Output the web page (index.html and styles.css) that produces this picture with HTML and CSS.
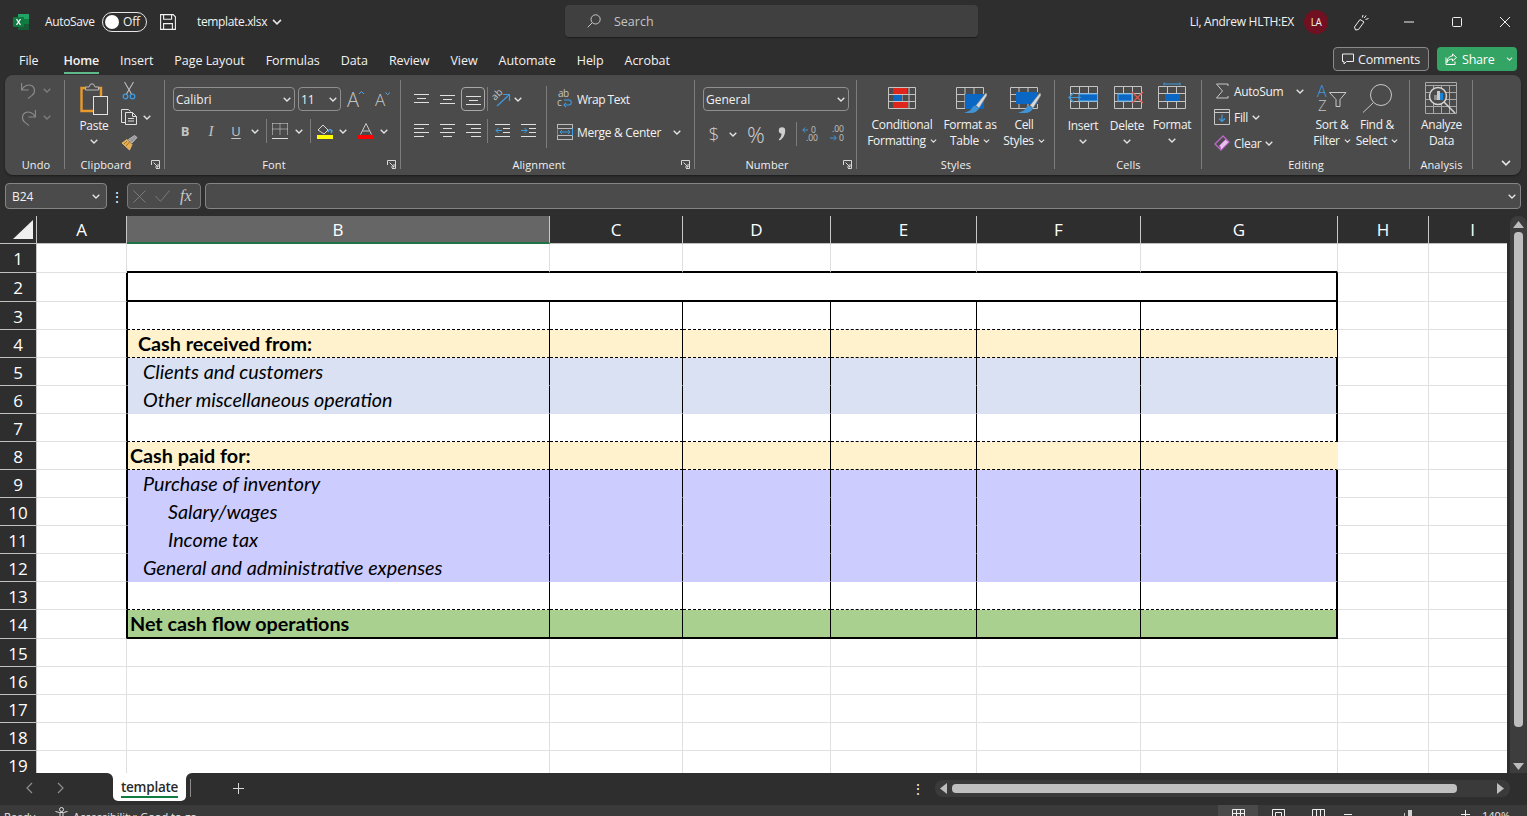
FILE: index.html
```html
<!DOCTYPE html>
<html lang="en">
<head>
<meta charset="utf-8">
<title>template.xlsx</title>
<link rel="stylesheet" href="styles.css">
</head>
<body>
<svg class="defs" aria-hidden="true">
  <symbol id="ch" viewBox="0 0 8 5"><path d="M.7.7 4 4 7.3.7" fill="none" stroke="currentColor" stroke-width="1.3"/></symbol>
  <symbol id="launch" viewBox="0 0 9 9"><path d="M.5 5V.5h8v8H5M2.5 2.5 7 7M7 4v3H4" fill="none" stroke="#d8d8d8"/></symbol>
  <symbol id="brush" viewBox="0 0 31 26"><path d="M30 6 20 18.500l3 2.500 8-13z" fill="#d8d8d8" stroke="#8f8f8f" stroke-width=".6"/><path d="M19 18.500c-3 1-3 3.500-5 4.800-1.500 1-3.500 1.700-6 2.700h7c4 0 6.500-2 8-4.500z" fill="#3f94d8"/></symbol>
</svg>

<header class="titlebar">
  <div class="tb-left">
    <svg class="xl" width="16" height="16" viewBox="0 0 16 16"><rect x="5" width="11" height="5.500" fill="#21a366"/><rect x="5" y="5" width="11" height="5.500" fill="#107c41"/><rect x="5" y="10.500" width="11" height="5.500" fill="#185c37"/><rect y="3" width="11" height="10" rx="1" fill="#0e7a3f"/><path d="m3.500 5.200 4 5.600m0-5.600-4 5.600" stroke="#fff" stroke-width="1.200"/></svg>
    <span class="autosave">AutoSave</span>
    <span class="toggle"><i class="knob"></i><span>Off</span></span>
    <svg class="save" width="16" height="16" viewBox="0 0 16 16" fill="none" stroke="#f2f2f2" stroke-width="1.100"><path d="M.6.600h12.600l2.200 2.200v12.600H.6zM3.600.600v4.600h8V.600M3.600 15.400V9.600h8.800v5.800"/></svg>
    <span class="fname">template.xlsx</span>
    <svg class="ch fn-ch"><use href="#ch"/></svg>
  </div>
  <div class="search">
    <svg width="14" height="14" viewBox="0 0 14 14" fill="none" stroke="#c8c8c8"><circle cx="8.600" cy="5.400" r="4.600"/><path d="M5.200 8.800.7 13.300"/></svg>
    <span>Search</span>
  </div>
  <div class="tb-right">
    <span class="uname">Li, Andrew HLTH:EX</span>
    <span class="avatar">LA</span>
    <svg width="17" height="17" viewBox="0 0 17 17" fill="none" stroke="#efefef"><path d="M7 5.500 11 8 5.500 15.500 2.500 16 1.500 13zM10 1l-.7 2.600M13 1.500 11.300 4M15.500 4.500l-3 1"/></svg>
    <svg width="10" height="10" viewBox="0 0 10 10"><path d="M0 5h10" stroke="#efefef"/></svg>
    <svg width="10" height="10" viewBox="0 0 10 10"><rect x=".5" y=".5" width="9" height="9" rx="1" fill="none" stroke="#efefef"/></svg>
    <svg width="10" height="10" viewBox="0 0 10 10"><path d="m0 0 10 10M10 0 0 10" stroke="#efefef"/></svg>
  </div>
</header>

<nav class="tabs">
  <span>File</span>
  <span class="active">Home</span>
  <span>Insert</span>
  <span>Page Layout</span>
  <span>Formulas</span>
  <span>Data</span>
  <span>Review</span>
  <span>View</span>
  <span>Automate</span>
  <span>Help</span>
  <span>Acrobat</span>
  <div class="tab-actions">
    <button class="comments"><svg width="12" height="12" viewBox="0 0 12 12" fill="none" stroke="#eee"><path d="M.5 1h11v7.500H4.500L2 11V8.500H.5z"/></svg>Comments</button>
    <button class="share"><svg width="12" height="12" viewBox="0 0 12 12" fill="none" stroke="#fff"><path d="M7.500 1 11.500 4.500 7.500 8V6C4 6 2.500 7.500 2 9.500 2 6 4 3 7.500 3zM1 4.500v7h9V8.500"/></svg><span>Share</span><svg class="ch share-ch"><use href="#ch"/></svg></button>
  </div>
</nav>

<section class="ribbon">
  <div class="group g-undo">
    <div class="gbody undo-body">
      <div class="undo-row">
        <svg width="15" height="18" viewBox="0 0 15 18" fill="none" stroke="#8c8c8c" stroke-width="1.100"><path d="M.6 1v7h7M.8 7.500C3 3.500 7.500 2 10.500 3.600c4 2.200 4 7.500.2 10L7 16.600"/></svg>
        <svg class="ch dim"><use href="#ch"/></svg>
      </div>
      <div class="undo-row">
        <svg width="15" height="18" viewBox="0 0 15 18" fill="none" stroke="#8c8c8c" stroke-width="1.100"><path d="M14.400 1v7h-7M14.200 7.500C12 3.500 7.500 2 4.500 3.600c-4 2.200-4 7.500-.2 10L8 16.600"/></svg>
        <svg class="ch dim"><use href="#ch"/></svg>
      </div>
    </div>
    <div class="glabel"><span>Undo</span></div>
  </div>

  <div class="group g-clip">
    <div class="gbody clip-body">
      <div class="big">
        <div class="big-ico paste-ico">
          <svg width="28" height="32" viewBox="0 0 28 32" fill="none"><path d="M6 5H1.500v23H13M16 5h5v8" stroke="#e89a2c" stroke-width="2.400"/><path d="M5.500 7V4H9l1.500-3h3L15 4h3.500v3z" stroke="#b8b8b8" fill="#4b4b4b"/><rect x="13.500" y="13.500" width="14" height="18" stroke="#e4e4e4" fill="#4b4b4b"/></svg>
        </div>
        <span class="big-text">Paste</span>
        <svg class="ch big-ch"><use href="#ch"/></svg>
      </div>
      <div class="clip-tools">
        <div class="clip-row">
          <svg width="16" height="18" viewBox="0 0 16 18" fill="none"><path d="M3.500 0 10.500 12M12.500 0 5.500 12" stroke="#bdbdbd" stroke-width="1.100"/><circle cx="4.500" cy="14.500" r="2.300" stroke="#3d9be0" stroke-width="1.300"/><circle cx="11.500" cy="14.500" r="2.300" stroke="#3d9be0" stroke-width="1.300"/></svg>
        </div>
        <div class="clip-row">
          <svg width="16" height="16" viewBox="0 0 16 16" fill="none" stroke="#e0e0e0"><path d="M4.500 13.500H.5V.5h7l2 2"/><path d="M4.500 3.500h7l4 4v8h-11zM11.500 3.500v4h4M7 9.500h6M7 12h6"/></svg>
          <svg class="ch clip-ch"><use href="#ch"/></svg>
        </div>
        <div class="clip-row">
          <svg width="16" height="16" viewBox="0 0 16 16" fill="none"><path d="M6 4.500 11 9.500 8.500 15 1 8z" fill="#e8ad4e" stroke="#f4c878" stroke-width=".8"/><path d="M5 11 9 6.500M3 9l3-3" stroke="#8a6a2a" stroke-width=".8"/><path d="M7.500 4.500 9.500 6.500 11 8 16 2.500 13.500.5z" fill="#9a9a9a" stroke="#c8c8c8" stroke-width=".8"/></svg>
        </div>
      </div>
    </div>
    <div class="glabel"><span>Clipboard</span><svg class="launch"><use href="#launch"/></svg></div>
  </div>

  <div class="group g-font">
    <div class="gbody stack">
      <div class="font-r1">
        <div class="combo font-name"><span>Calibri</span><svg class="ch"><use href="#ch"/></svg></div>
        <div class="combo font-size"><span>11</span><svg class="ch"><use href="#ch"/></svg></div>
        <svg class="grow-a" width="18" height="18" viewBox="0 0 18 18"><text x="0" y="17" class="ig ig-a1">A</text><path d="m12 4 2.500-2.500L17 4" fill="none" stroke="#56a6e6"/></svg>
        <svg class="shrink-a" width="16" height="16" viewBox="0 0 16 16"><text x="0" y="15" class="ig ig-a2">A</text><path d="m10.500 1.500 2.200 2.200L15 1.500" fill="none" stroke="#56a6e6"/></svg>
      </div>
      <div class="font-r2">
        <span class="ig-b">B</span>
        <span class="ig-i">I</span>
        <span class="ig-u">U</span>
        <svg class="ch"><use href="#ch"/></svg>
        <i class="sep"></i>
        <svg width="16" height="16" viewBox="0 0 16 16" fill="none" stroke="#dcdcdc"><path d="M.5.500h15M.5.500v11M15.500.500v11M8 .5v11M.5 6h15" stroke-dasharray="1 1"/><path d="M0 15.500h16"/></svg>
        <svg class="ch"><use href="#ch"/></svg>
        <i class="sep"></i>
        <svg width="16" height="16" viewBox="0 0 16 16"><path d="M1 7 6 2l5 5-4 4z" fill="none" stroke="#d8d8d8"/><path d="M11 9c1-3 2-3 4-1l-1 2" fill="none" stroke="#5aa5de" stroke-width="1.500"/><rect y="12" width="16" height="4" fill="#ffff00"/></svg>
        <svg class="ch"><use href="#ch"/></svg>
        <svg width="16" height="16" viewBox="0 0 16 16"><path d="m2.500 11.500 5.500-11 5.500 11M4.500 8h7" fill="none" stroke="#c8c8c8"/><rect y="12" width="16" height="4" fill="#ff0000"/></svg>
        <svg class="ch"><use href="#ch"/></svg>
      </div>
    </div>
    <div class="glabel"><span>Font</span><svg class="launch"><use href="#launch"/></svg></div>
  </div>

  <div class="group g-align">
    <div class="gbody al-body">
      <div class="al-left">
        <div class="al-r1">
          <svg width="15" height="11" viewBox="0 0 15 11" stroke="#e0e0e0"><path d="M0 .5h15M3 4.500h9M0 8.500h15"/></svg>
          <svg width="15" height="11" viewBox="0 0 15 11" stroke="#e0e0e0"><path d="M0 1.500h15M3 5.500h9M0 9.500h15"/></svg>
          <span class="sel"><svg width="15" height="11" viewBox="0 0 15 11" stroke="#e0e0e0"><path d="M0 2.500h15M3 6.500h9M0 10.500h15"/></svg></span>
          <i class="sep"></i>
          <svg width="17" height="16" viewBox="0 0 17 16" fill="none"><text x="1" y="10" transform="rotate(-45 1 10)" class="ig ig-ori">ab</text><path d="m3 15 12-11M9 3.500h6.500V10" stroke="#3d9be0" stroke-width="1.200"/></svg>
          <svg class="ch"><use href="#ch"/></svg>
        </div>
        <div class="al-r2">
          <svg width="15" height="15" viewBox="0 0 15 15" stroke="#e0e0e0"><path d="M0 .5h15M0 4.500h10M0 8.500h15M0 12.500h10"/></svg>
          <svg width="15" height="15" viewBox="0 0 15 15" stroke="#e0e0e0"><path d="M0 .5h15M3 4.500h9M0 8.500h15M3 12.500h9"/></svg>
          <svg width="15" height="15" viewBox="0 0 15 15" stroke="#e0e0e0"><path d="M0 .5h15M5 4.500h10M0 8.500h15M5 12.500h10"/></svg>
          <i class="sep"></i>
          <svg width="15" height="15" viewBox="0 0 15 15" fill="none"><path d="M0 .5h15M8 4.500h7M8 8.500h7M0 12.500h15" stroke="#e0e0e0"/><path d="M7 6.500H1M3.500 4 1 6.500 3.500 9" stroke="#3d9be0"/></svg>
          <svg width="15" height="15" viewBox="0 0 15 15" fill="none"><path d="M0 .5h15M8 4.500h7M8 8.500h7M0 12.500h15" stroke="#e0e0e0"/><path d="M0 6.500h6M3.500 4 6 6.500 3.500 9" stroke="#3d9be0"/></svg>
        </div>
      </div>
      <i class="vsep"></i>
      <div class="al-right">
        <div class="al-line">
          <svg class="wrap-ico" width="16" height="18" viewBox="0 0 16 18"><text x="1" y="7" class="ig ig-ab">ab</text><text x="0" y="16" class="ig ig-ab">c</text><path d="M9 15h3c3 0 3-5 0-5H7M9 13l-2 2 2 2" fill="none" stroke="#3d9be0" stroke-width="1.100"/></svg>
          <span>Wrap Text</span>
        </div>
        <div class="al-line">
          <svg width="16" height="16" viewBox="0 0 16 16" fill="none"><rect x=".5" y=".5" width="15" height="15" stroke="#bbb"/><path d="M0 4.500h16M0 11.500h16" stroke="#bbb"/><path d="M3 8h10M5 6 3 8l2 2M11 6l2 2-2 2" stroke="#3d9be0"/><path d="M.5 4.500v7M15.500 4.500v7" stroke="#3d9be0"/></svg>
          <span>Merge &amp; Center</span>
          <svg class="ch merge-ch"><use href="#ch"/></svg>
        </div>
      </div>
    </div>
    <div class="glabel"><span>Alignment</span><svg class="launch"><use href="#launch"/></svg></div>
  </div>

  <div class="group g-num">
    <div class="gbody stack">
      <div class="combo num-fmt"><span>General</span><svg class="ch"><use href="#ch"/></svg></div>
      <div class="num-r2">
        <span class="ig-num">$</span>
        <svg class="ch"><use href="#ch"/></svg>
        <span class="ig-num ig-pc">%</span>
        <svg width="8" height="14" viewBox="0 0 8 14"><path d="M.8 3.500a3.200 3.200 0 1 1 6.400 0c0 4.500-2.200 8-5.500 10l-1-1.200c1.800-1.300 2.700-3 2.800-5.600A3.200 3.200 0 0 1 .8 3.500z" fill="#cfcfcf"/></svg>
        <i class="sep"></i>
        <svg width="16" height="16" viewBox="0 0 16 16"><text x="9" y="7" class="ig ig-dec">0</text><text x="4" y="15" class="ig ig-dec">.00</text><path d="M6 4H1M3 1.500.8 4 3 6.500" fill="none" stroke="#3d9be0"/></svg>
        <svg width="16" height="16" viewBox="0 0 16 16"><text x="3" y="6" class="ig ig-dec">.00</text><text x="10" y="15" class="ig ig-dec">0</text><path d="M1 12h6M5 9.500 7.300 12 5 14.500" fill="none" stroke="#3d9be0"/></svg>
      </div>
    </div>
    <div class="glabel"><span>Number</span><svg class="launch"><use href="#launch"/></svg></div>
  </div>

  <div class="group g-styles">
    <div class="gbody styles-body">
      <div class="big">
        <div class="big-ico">
          <svg width="28" height="22" viewBox="0 0 28 22" fill="none"><path d="M.5.500h27v21H.5zM.5 7.500h27M.5 14.500h27M7 .5v21M14 .5v21M21 .5v21" stroke="#c4c4c4"/><path d="M5 1h14v6H5zM5 15h15v6H5z" fill="#e0261c"/><rect x="5" y="8" width="9" height="6" fill="#0a68c4"/></svg>
        </div>
        <span class="big-text">Conditional</span>
        <span class="big-text">Formatting <svg class="ch"><use href="#ch"/></svg></span>
      </div>
      <div class="big">
        <div class="big-ico brush-ico">
          <svg width="31" height="26" viewBox="0 0 31 26" fill="none"><path d="M.5.500h27v21H.5zM.5 7.500h27M.5 14.500h27M9 .5v21M18 .5v21" stroke="#c4c4c4"/><rect x="9" y="7" width="19" height="15" fill="#0a68c4"/><use href="#brush"/></svg>
        </div>
        <span class="big-text">Format as</span>
        <span class="big-text">Table <svg class="ch"><use href="#ch"/></svg></span>
      </div>
      <div class="big">
        <div class="big-ico brush-ico">
          <svg width="31" height="26" viewBox="0 0 31 26" fill="none"><path d="M.5.500h27v21H.5zM.5 7.500h27M.5 14.500h27M9 .5v21M18 .5v21" stroke="#c4c4c4"/><rect x="6" y="5" width="22" height="12" fill="#0a68c4"/><use href="#brush"/></svg>
        </div>
        <span class="big-text">Cell</span>
        <span class="big-text">Styles <svg class="ch"><use href="#ch"/></svg></span>
      </div>
    </div>
    <div class="glabel"><span>Styles</span></div>
  </div>

  <div class="group g-cells">
    <div class="gbody cells-body">
      <div class="big">
        <div class="big-ico">
          <svg width="30" height="23" viewBox="0 0 30 23" fill="none"><path d="M2.500.5h27v22h-27zM11.500.5v22M20.500.5v22M2.500 7.500h27M2.500 15.500h27" stroke="#c4c4c4"/><rect x="11" y="8" width="18.500" height="7" fill="#0a68c4" stroke="#5fb0ee"/><path d="M13 11.500H1M6 6.500 1 11.500l5 5" stroke="#3d9be0" stroke-width="1.200"/></svg>
        </div>
        <span class="big-text">Insert</span>
        <svg class="ch big-ch"><use href="#ch"/></svg>
      </div>
      <div class="big">
        <div class="big-ico del-ico">
          <svg width="29" height="23" viewBox="0 0 29 23" fill="none"><path d="M.5.500h27v22H.5zM9.500.5v22M18.500.5v22M.5 7.500h27M.5 15.500h27" stroke="#c4c4c4"/><rect x="4" y="8" width="14" height="7" fill="#0a68c4" stroke="#5fb0ee"/><path d="m18 6 11 11M29 6 18 17" stroke="#e05a4f" stroke-width="1.200"/></svg>
        </div>
        <span class="big-text">Delete</span>
        <svg class="ch big-ch"><use href="#ch"/></svg>
      </div>
      <div class="big format-col">
        <div class="big-ico">
          <svg width="28" height="27" viewBox="0 0 28 27" fill="none"><path d="M6 .5v3M22 .5v3M6 2h16" stroke="#3d9be0"/><path d="M.5 4.500h27v22H.5zM9.500 4.500v22M18.500 4.500v22M.5 11.500h27M.5 19.500h27" stroke="#c4c4c4"/><rect x="7" y="12" width="15" height="7" fill="#0a68c4"/></svg>
        </div>
        <span class="big-text">Format</span>
        <svg class="ch big-ch"><use href="#ch"/></svg>
      </div>
    </div>
    <div class="glabel"><span>Cells</span></div>
  </div>

  <div class="group g-edit">
    <div class="gbody edit-body">
      <div class="edit-left">
        <div class="edit-row">
          <svg width="16" height="16" viewBox="0 0 16 16" fill="none" stroke="#c8c8c8"><path d="M14 3V1H2.500L8.500 8l-6 7H14v-2"/></svg>
          <span>AutoSum</span>
          <svg class="ch sum-ch"><use href="#ch"/></svg>
        </div>
        <div class="edit-row">
          <svg width="16" height="16" viewBox="0 0 16 16" fill="none"><path d="M.5.500h15v15H.5zM0 3.500h16" stroke="#c8c8c8"/><path d="M8 5.500v7M5 9.500l3 3 3-3" stroke="#3d9be0" stroke-width="1.200"/></svg>
          <span>Fill</span>
          <svg class="ch"><use href="#ch"/></svg>
        </div>
        <div class="edit-row">
          <svg width="16" height="16" viewBox="0 0 16 16"><path d="M1 9 9 1l6 6-8 8z" fill="#4b4b4b" stroke="#bb66c8" stroke-width="1.400"/><path d="M5.500 10.500 11.500 4.500 15 7l-8 8z" fill="#e6bfea" stroke="#bb66c8"/></svg>
          <span>Clear</span>
          <svg class="ch"><use href="#ch"/></svg>
        </div>
      </div>
      <div class="big">
        <div class="big-ico sort-ico">
          <svg width="30" height="28" viewBox="0 0 30 28" fill="none"><text x="0" y="13" class="ig ig-az1">A</text><text x="1" y="27" class="ig ig-az2">Z</text><path d="M12.500 8.500H29l-6 7v7h-4v-7z" stroke="#c8c8c8"/></svg>
        </div>
        <span class="big-text">Sort &amp;</span>
        <span class="big-text">Filter <svg class="ch"><use href="#ch"/></svg></span>
      </div>
      <div class="big">
        <div class="big-ico find-ico">
          <svg width="30" height="29" viewBox="0 0 30 29" fill="none" stroke="#c8c8c8"><circle cx="19" cy="11" r="10.500"/><path d="M11.500 18.500 1 28.500"/></svg>
        </div>
        <span class="big-text">Find &amp;</span>
        <span class="big-text">Select <svg class="ch"><use href="#ch"/></svg></span>
      </div>
    </div>
    <div class="glabel"><span>Editing</span></div>
  </div>

  <div class="group g-analysis">
    <div class="gbody">
      <div class="big">
        <div class="big-ico analyze-ico">
          <svg width="32" height="32" viewBox="0 0 32 32" fill="none"><path d="M.5.500h31v31H.5zM0 3.500h32M.5 10.500h31M.5 17.500h31M.5 24.500h31M8.500 3v29M16.500 3v29M24.500 3v29" stroke="#a8a8a8"/><circle cx="13" cy="14" r="8.500" fill="#4b4b4b" stroke="#d4d4d4" stroke-width="1.500"/><rect x="9" y="13" width="3" height="5" fill="#8f8f8f"/><rect x="12" y="9" width="3" height="9" fill="#c8c8c8"/><rect x="15" y="11" width="3" height="7" fill="#1a84d8"/><path d="m19 20 11 11" stroke="#d4d4d4" stroke-width="1.500"/></svg>
        </div>
        <span class="big-text">Analyze</span>
        <span class="big-text">Data</span>
      </div>
    </div>
    <div class="glabel"><span>Analysis</span></div>
  </div>

  <svg class="ch collapse"><use href="#ch"/></svg>
</section>

<section class="fbar">
  <div class="namebox"><span>B24</span><svg class="ch"><use href="#ch"/></svg></div>
  <span class="fdots">⋮</span>
  <div class="fbtns">
    <svg width="13" height="13" viewBox="0 0 13 13"><path d="m.5.500 12 12m0-12-12 12" stroke="#7a7a7a"/></svg>
    <svg width="15" height="12" viewBox="0 0 15 12"><path d="m.5 6 5 5.500L14.500.5" fill="none" stroke="#7a7a7a"/></svg>
    <span class="fx">fx</span>
  </div>
  <div class="finput"><svg class="ch"><use href="#ch"/></svg></div>
</section>

<main class="sheet">
  <div class="grid">
    <div class="row head">
      <div class="corner"><svg width="20" height="19" viewBox="0 0 20 19"><path d="M20 0v19H0z" fill="#efefef"/></svg></div>
      <div>A</div><div class="cur">B</div><div>C</div><div>D</div><div>E</div><div>F</div><div>G</div><div>H</div><div>I</div>
    </div>
    <div class="row r29 above"><div>1</div><div></div><div></div><div></div><div></div><div></div><div></div><div></div><div></div><div></div></div>
    <div class="row r29 title"><div>2</div><div></div><div class="merged"></div><div></div><div></div></div>
    <div class="row tbl dash white"><div>3</div><div></div><div></div><div></div><div></div><div></div><div></div><div></div><div></div><div></div></div>
    <div class="row tbl dash yellow thin"><div>4</div><div></div><div class="txt b in-1">Cash received from:</div><div></div><div></div><div></div><div></div><div class="solid"></div><div></div><div></div></div>
    <div class="row tbl blue"><div>5</div><div></div><div class="txt it in-2">Clients and customers</div><div></div><div></div><div></div><div></div><div></div><div></div><div></div></div>
    <div class="row tbl blue"><div>6</div><div></div><div class="txt it in-2">Other miscellaneous operation</div><div></div><div></div><div></div><div></div><div></div><div></div><div></div></div>
    <div class="row tbl dash white"><div>7</div><div></div><div></div><div></div><div></div><div></div><div></div><div></div><div></div><div></div></div>
    <div class="row tbl dash yellow open"><div>8</div><div></div><div class="txt b in-0">Cash paid for:</div><div></div><div></div><div></div><div></div><div></div><div></div><div></div></div>
    <div class="row tbl violet"><div>9</div><div></div><div class="txt it in-2">Purchase of inventory</div><div></div><div></div><div></div><div></div><div></div><div></div><div></div></div>
    <div class="row tbl violet"><div>10</div><div></div><div class="txt it in-3">Salary/wages</div><div></div><div></div><div></div><div></div><div></div><div></div><div></div></div>
    <div class="row tbl violet"><div>11</div><div></div><div class="txt it in-3">Income tax</div><div></div><div></div><div></div><div></div><div></div><div></div><div></div></div>
    <div class="row tbl violet"><div>12</div><div></div><div class="txt it in-2">General and administrative expenses</div><div></div><div></div><div></div><div></div><div></div><div></div><div></div></div>
    <div class="row tbl dash white"><div>13</div><div></div><div></div><div></div><div></div><div></div><div></div><div></div><div></div><div></div></div>
    <div class="row r29 tbl green"><div>14</div><div></div><div class="txt b in-0">Net cash flow operations</div><div></div><div></div><div></div><div></div><div></div><div></div><div></div></div>
    <div class="row"><div>15</div><div></div><div></div><div></div><div></div><div></div><div></div><div></div><div></div><div></div></div>
    <div class="row"><div>16</div><div></div><div></div><div></div><div></div><div></div><div></div><div></div><div></div><div></div></div>
    <div class="row"><div>17</div><div></div><div></div><div></div><div></div><div></div><div></div><div></div><div></div><div></div></div>
    <div class="row"><div>18</div><div></div><div></div><div></div><div></div><div></div><div></div><div></div><div></div><div></div></div>
    <div class="row"><div>19</div><div></div><div></div><div></div><div></div><div></div><div></div><div></div><div></div><div></div></div>
  </div>
  <div class="vscroll">
    <div class="vtrack">
      <svg class="vup" width="11" height="7" viewBox="0 0 11 7"><path d="M5.500 0 11 7H0z" fill="#bdbdbd"/></svg>
      <div class="vthumb"></div>
      <svg class="vdown" width="11" height="7" viewBox="0 0 11 7"><path d="M5.500 7 11 0H0z" fill="#bdbdbd"/></svg>
    </div>
  </div>
</main>

<footer class="sheetbar">
  <div class="nav">
    <svg width="8" height="12" viewBox="0 0 8 12"><path d="M7 1 2 6l5 5" fill="none" stroke="#8f8f8f" stroke-width="1.200"/></svg>
    <svg width="8" height="12" viewBox="0 0 8 12"><path d="m1 1 5 5-5 5" fill="none" stroke="#8f8f8f" stroke-width="1.200"/></svg>
  </div>
  <div class="stab"><span>template</span></div>
  <div class="strip">
    <i class="strip-sep"></i>
    <svg class="plus" width="11" height="11" viewBox="0 0 11 11"><path d="M5.500 0v11M0 5.500h11" stroke="#d8d8d8"/></svg>
    <span class="hdots">⋮</span>
    <div class="htrack">
      <svg width="7" height="11" viewBox="0 0 7 11"><path d="M0 5.500 7 0v11z" fill="#bdbdbd"/></svg>
      <div class="hthumb"></div>
      <svg width="7" height="11" viewBox="0 0 7 11"><path d="M7 5.500 0 0v11z" fill="#bdbdbd"/></svg>
    </div>
  </div>
</footer>

<div class="status">
  <span class="ready">Ready</span>
  <svg class="acc" width="13" height="13" viewBox="0 0 13 13" fill="none" stroke="#e0e0e0"><circle cx="6.500" cy="2.500" r="2"/><path d="M.5 4.500l4 1h4l4-1M5 6v3l-2 3M8 6v3l2 3"/></svg>
  <span>Accessibility: Good to go</span>
  <div class="st-right">
    <span class="view on"><svg width="13" height="13" viewBox="0 0 13 13" fill="none" stroke="#eee"><path d="M.5.500h12v12H.5zM.5 4.500h12M.5 8.500h12M4.500.5v12M8.500.5v12"/></svg></span>
    <span class="view"><svg width="13" height="13" viewBox="0 0 13 13" fill="none" stroke="#eee"><path d="M.5.500h12v12H.5zM3.500 3.500h6v6h-6z"/></svg></span>
    <span class="view"><svg width="13" height="13" viewBox="0 0 13 13" fill="none" stroke="#eee"><path d="M.5.500h12v12H.5zM4.500.5v12M8.500.5v12"/></svg></span>
    <span class="zbtn"><i class="zminus"></i></span>
    <span class="zslider"><i class="ztick"></i><i class="zthumb"></i></span>
    <span class="zbtn"><svg width="9" height="9" viewBox="0 0 9 9"><path d="M4.500 0v9M0 4.500h9" stroke="#eee"/></svg></span>
    <span class="zpct">140%</span>
  </div>
</div>
</body>
</html>
```

FILE: styles.css
```css
* { box-sizing: border-box; }
html, body { margin: 0; padding: 0; }
body {
  width: 1527px;
  height: 816px;
  overflow: hidden;
  background: #2e2e2e;
  color: #f2f2f2;
  font-family: "Open Sans", "Noto Sans", sans-serif;
  font-size: 12px;
}
svg { display: block; flex: none; overflow: visible; }
i { display: block; }
.defs { width: 0; height: 0; }
.ch { width: 8px; height: 5px; color: #e4e4e4; }
.dim { color: #7e7e7e; }

/* title bar */
.titlebar { display: grid; grid-template-columns: 565px 413px 1fr; height: 44px; align-items: center; }
.tb-left { display: flex; align-items: center; padding-left: 13px; }
.autosave { margin: -2px 0 0 16px; width: 57px; letter-spacing: -.35px; font-size: 12px; }
.toggle { display: flex; align-items: center; width: 45px; height: 20px; border: 1.500px solid #e6e6e6; border-radius: 10px; padding-left: 2px; font-size: 12px; }
.toggle span { margin: -2px 0 0 4px; letter-spacing: -.2px; }
.knob { width: 14px; height: 14px; border-radius: 50%; background: #fff; }
.save { margin-left: 13px; }
.fname { margin: -2px 0 0 21px; letter-spacing: -.35px; }
.fn-ch { margin-left: 5px; width: 10px; height: 6px; }
.search { display: flex; align-items: center; height: 32px; margin-top: -2px; background: #404040; border-radius: 4px; padding-left: 22px; gap: 13px; color: #c4c4c4; box-shadow: 0 1px 1px #1f1f1f; }
.search span { font-size: 12.500px; }
.tb-right { display: grid; grid-template-columns: 1fr 24px 66px 30px 66px 30px; padding-right: 7px; align-items: center; justify-items: center; }
.uname { justify-self: end; margin: -2px 10px 0 0; letter-spacing: -.27px; font-size: 12px; }
.avatar { display: flex; width: 24px; height: 24px; align-items: center; justify-content: center; border-radius: 50%; background: #701020; font-size: 10px; letter-spacing: -.5px; margin-top: -1px; }

/* tabs */
.tabs { display: flex; align-items: center; height: 31px; padding-left: 19px; gap: 21px; font-size: 12.500px; letter-spacing: -.05px; }
.tabs > span { position: relative; margin-top: 1px; }
.tabs > span:first-child { margin-right: 4px; }
.active { font-weight: 600; letter-spacing: -.2px; }
.active::after { content: ""; position: absolute; left: 0; right: 0; top: 20px; height: 2px; background: #5fb98a; }
.tab-actions { display: flex; gap: 8px; margin-left: auto; padding-right: 10px; margin-top: -1px; }
.comments, .share { display: flex; align-items: center; height: 24px; border-radius: 4px; color: #f2f2f2; font: inherit; letter-spacing: -.2px; padding: 0; }
.comments { width: 96px; border: 1px solid #8a8a8a; background: #3e3e3e; padding-left: 8px; gap: 4px; }
.share { width: 80px; border: 0; background: #33a463; padding-left: 8px; gap: 5px; color: #fff; }
.share-ch { margin-left: auto; margin-right: 4px; width: 7px; height: 4px; }

/* ribbon */
.ribbon { position: relative; display: flex; height: 100px; margin: 0 6px 0 5px; background: #4b4b4b; border-radius: 8px; box-shadow: 0 1px 2px #1c1c1c; }
.group { display: flex; flex-direction: column; position: relative; }
.group::after { content: ""; position: absolute; right: 0; top: 5px; bottom: 6px; width: 1px; background: #7c7c7c; }
.g-undo { width: 60px; }
.g-clip { width: 100px; }
.g-font { width: 236px; }
.g-align { width: 294px; }
.g-num { width: 162px; }
.g-styles { width: 198px; }
.g-cells { width: 147px; }
.g-edit { width: 208px; }
.g-analysis { width: 63px; }
.gbody { height: 80px; }
.glabel { display: flex; align-items: center; height: 20px; margin-top: -1px; font-size: 11px; letter-spacing: .1px; color: #f0f0f0; }
.glabel span { flex: 1; text-align: center; }
.g-undo .glabel span { padding-left: 2px; }
.launch { width: 9px; height: 9px; margin: 1px 5px 0 4px; }
.sep { width: 1px; height: 24px; background: #7c7c7c; }
.ig { fill: #c4c4c4; font-family: "Open Sans", sans-serif; }
.ig-a1 { font-size: 20px; font-weight: 300; }
.ig-a2 { font-size: 17px; font-weight: 300; }
.ig-ab { font-size: 10px; }
.ig-ori { font-size: 10px; }
.ig-dec { font-size: 8.500px; }
.ig-az1 { font-size: 16px; font-weight: 300; fill: #3d9be0; }
.ig-az2 { font-size: 15px; font-weight: 300; }

/* big buttons */
.big { display: flex; flex-direction: column; align-items: center; justify-self: center; white-space: nowrap; }
.big-ico { display: flex; height: 42px; align-items: flex-end; padding-bottom: 8px; }
.big-text { display: flex; align-items: center; gap: 4px; height: 16px; font-size: 12px; letter-spacing: -.3px; }
.big-ch { margin-top: 6px; }
.big-text .ch { width: 7px; height: 4px; margin-top: 1px; }

/* undo */
.undo-body { padding: 2px 0 0 16px; }
.undo-row { display: flex; align-items: center; height: 27px; gap: 7px; }

/* clipboard */
.clip-body { display: flex; }
.clip-body > .big { width: 58px; }
.paste-ico { padding-bottom: 2px; }
.clip-tools { padding-top: 3px; margin-left: -2px; }
.clip-row { display: flex; align-items: center; height: 26px; }
.clip-ch { margin-left: 6px; }

/* font */
.stack { display: flex; flex-direction: column; gap: 8px; padding: 12px 0 0 8px; }
.combo { display: flex; align-items: center; justify-content: space-between; height: 24px; border: 1px solid #8f8f8f; border-radius: 4px; padding: 0 3px 0 2px; font-size: 12px; color: #f0f0f0; }
.font-r1 { display: flex; align-items: center; gap: 3px; }
.font-name { width: 122px; }
.font-size { width: 43px; }
.grow-a { margin-left: 3px; }
.shrink-a { margin-left: 7px; }
.font-r2 { display: grid; grid-template-columns: 22px 30px 20px 18px 4px 24px 14px 8px 22px 14px 32px 4px; height: 24px; margin-left: 1px; place-items: center; }
.ig-b, .ig-i, .ig-u { font-size: 13px; color: #c4c4c4; }
.ig-b { font-weight: 700; }
.ig-i { font-style: italic; font-family: "Liberation Serif", serif; font-size: 15px; }
.ig-u { text-decoration: underline; text-underline-offset: 2px; }

/* alignment */
.al-body { display: flex; }
.al-left { width: 145px; padding: 12px 0 0 7px; display: flex; flex-direction: column; gap: 8px; }
.al-r1, .al-r2 { display: grid; height: 24px; place-items: center; }
.al-r1 { grid-template-columns: 26px 26px 26px 2px 28px 4px; }
.al-r2 { grid-template-columns: 26px 26px 26px 2px 28px 24px; }
.sel { display: flex; width: 24px; height: 24px; align-items: center; justify-content: center; border: 1px solid #a8a8a8; border-radius: 4px; }
.vsep { width: 1px; height: 62px; margin-top: 11px; background: #7c7c7c; }
.al-right { padding: 12px 0 0 10px; display: flex; flex-direction: column; gap: 9px; flex: 1; }
.al-line { display: flex; align-items: center; height: 24px; gap: 4px; letter-spacing: -.3px; }
.al-line:first-child { letter-spacing: -.5px; }
.merge-ch { margin-left: 8px; }

/* number */
.num-fmt { width: 146px; }
.num-r2 { display: grid; grid-template-columns: 22px 16px 30px 22px 6px 22px 32px; height: 24px; place-items: center; }
.ig-num { font-size: 19px; font-weight: 300; color: #cfcfcf; }
.ig-pc { font-size: 22px; }

/* styles + cells */
.styles-body { display: grid; grid-template-columns: 90px 46px 62px; }
.styles-body .big-ico { height: 41px; padding-bottom: 7px; }
.styles-body .brush-ico { padding-bottom: 3px; }
.brush-ico svg { margin-left: 3px; }
.cells-body { display: grid; grid-template-columns: 56px 32px 58px; }
.del-ico svg { margin-left: 3px; }
.format-col .big-ico { padding-bottom: 7px; }
.format-col { margin-top: -1px; }

/* editing */
.edit-body { display: grid; grid-template-columns: 108px 44px 46px; }
.edit-left { padding: 3px 0 0 12px; }
.edit-row { display: flex; align-items: center; height: 26px; gap: 4px; letter-spacing: -.3px; white-space: nowrap; }
.sum-ch { margin-left: 9px; }
.edit-body .big-ico { height: 41px; }
.edit-body .sort-ico { padding-bottom: 4px; }
.edit-body .find-ico { padding-bottom: 3px; }
.g-analysis .analyze-ico { height: 41px; padding-bottom: 2px; }

.collapse { position: absolute; right: 10px; top: 85px; width: 10px; height: 6px; }

/* formula bar */
.fbar { display: flex; align-items: center; height: 41px; padding: 8px 6px 7px 5px; }
.namebox { display: flex; align-items: center; justify-content: space-between; width: 102px; height: 26px; background: #4b4b4b; border: 1px solid #858585; border-radius: 4px; padding: 0 6px; font-size: 12px; }
.fdots { width: 20px; text-align: center; font-size: 14px; }
.fbtns { display: flex; align-items: center; width: 74px; height: 26px; background: #4b4b4b; border: 1px solid #7a7a7a; border-radius: 4px; padding-left: 5px; gap: 9px; }
.fx { font-family: "Liberation Serif", serif; font-style: italic; font-size: 16px; color: #c8c8c8; margin-left: 1px; }
.finput { display: flex; align-items: center; justify-content: flex-end; flex: 1; height: 26px; margin-left: 4px; background: #4b4b4b; border: 1px solid #858585; border-radius: 4px; padding-right: 4px; }

/* sheet */
.sheet { display: flex; height: 557px; overflow: hidden; }
.grid { width: 1507px; overflow: hidden; background: #fff; }
.row { display: grid; grid-template-columns: 37px 90px 423px 133px 148px 146px 164px 197px 91px 88px; height: 28px; }
.r29 { height: 29px; }
.row > div { border-right: 1px solid #e0e0e0; border-bottom: 1px solid #e0e0e0; color: #000; white-space: nowrap; }
.row > div:first-child { display: flex; align-items: center; justify-content: center; padding-top: 1px; background: #2e2e2e; color: #fff; font-size: 17px; border-right-color: #c8c8c8; border-bottom-color: #c0c0c0; }
.r29 > div:first-child { padding-top: 0; }
.head { height: 28px; background: #2e2e2e; }
.head > div, .head > div:first-child { display: flex; align-items: center; justify-content: center; padding-top: 0; background: #2e2e2e; color: #fff; font-size: 17px; border-right-color: #c8c8c8; border-bottom-color: #c0c0c0; }
.head > .corner { align-items: flex-start; padding: 4px 0 0 10px; }
.head > .cur { background: #666; border-bottom: 2px solid #217346; color: #fff; height: 28px; }

.above > div:nth-child(n+3):nth-child(-n+8) { border-bottom: 2px solid #000; }
.title > .merged { grid-column: 3 / span 6; border-left: 1px solid #000; border-right: 2px solid #000; border-bottom: 2px solid #000; }
.title > div:nth-child(2), .tbl > div:nth-child(2) { border-right-color: #000; }
.tbl > div:nth-child(3) { border-left: 1px solid #000; }
.tbl > div:nth-child(n+3):nth-child(-n+7) { border-right-color: #000; }
.tbl > div:nth-child(8) { border-right: 2px solid #000; }

.white > div:nth-child(n+3):nth-child(-n+8) { background: #fff; }
.yellow > div:nth-child(n+3):nth-child(-n+8) { background: #fff2cc; }
.blue > div:nth-child(n+3):nth-child(-n+8) { background: #d9e1f2; border-bottom-color: #d9e1f2; }
.violet > div:nth-child(n+3):nth-child(-n+8) { background: #ccccff; border-bottom-color: #ccccff; }
.green > div:nth-child(n+3):nth-child(-n+8) { background: #a9d08e; border-bottom: 2px solid #000; }
.white.dash > div:nth-child(n+3):nth-child(-n+8),
.yellow.dash > div:nth-child(n+3):nth-child(-n+8) { border-bottom: 1px dashed #000; }
.yellow.dash > div.solid { border-bottom: 1px solid #000; }
.thin > div:nth-child(8) { border-right-width: 1px; }
.open > div:nth-child(8) { border-right-color: #fff2cc; }

.txt { display: flex; align-items: center; color: #000; font-family: Lato, "Liberation Sans", sans-serif; font-size: 19.750px; }
.b { font-weight: 700; }
.it { font-style: italic; }
.in-0 { padding-left: 2px; }
.in-1 { padding-left: 10px; }
.in-2 { padding-left: 15px; }
.in-3 { padding-left: 40px; }

/* vertical scrollbar */
.vscroll { width: 20px; padding-left: 3px; background: #2e2e2e; }
.vtrack { display: flex; flex-direction: column; align-items: center; height: 100%; background: #3d3d3d; border-radius: 8px 8px 0 0; padding-top: 5px; }
.vthumb { width: 9px; height: 495px; margin-top: 4px; border-radius: 4px; background: #bfbfbf; }
.vdown { margin-top: auto; margin-bottom: 3px; }

/* sheet tabs */
.sheetbar { display: flex; height: 32px; background: linear-gradient(#fff 6px, #2e2e2e 6px); }
.nav { display: flex; align-items: center; flex: none; width: 113px; padding: 0 0 2px 25px; gap: 24px; background: #2e2e2e; border-top-right-radius: 6px; }
.stab { display: flex; justify-content: center; flex: none; width: 73px; height: 28px; background: #fff; border-radius: 0 0 5px 5px; }
.stab span { height: 25px; padding-top: 5px; border-bottom: 2px solid #107c41; line-height: 18px; width: 57px; text-align: center; color: #2a2a2a; font-size: 13.500px; font-weight: 600; letter-spacing: -.25px; }
.strip { display: flex; align-items: center; flex: 1; min-width: 0; padding: 0 17px 2px 4px; background: #2e2e2e; border-top-left-radius: 6px; }
.strip-sep { flex: none; width: 1px; height: 18px; background: #8a8a8a; }
.plus { margin-left: 42px; }
.hdots { flex: none; margin-left: 667px; width: 8px; font-size: 14px; text-align: center; }
.htrack { display: flex; align-items: center; flex: none; width: 575px; height: 17px; margin-left: 16px; padding: 0 6px 0 5px; background: #3a3a3a; border-radius: 8px; }
.hthumb { width: 505px; height: 9px; margin: 0 auto 0 5px; border-radius: 4px; background: #c0c0c0; }

/* status */
.status { display: flex; align-items: flex-start; height: 11px; overflow: hidden; background: #3a3a3a; font-size: 11px; line-height: 16px; padding: 2px 0 0 4px; color: #e8e8e8; }
.ready { width: 51px; padding-top: 2px; }
.acc { margin-right: 5px; }
.status > span:nth-of-type(2) { padding-top: 2px; }
.st-right { display: grid; grid-template-columns: 40px 40px 40px 20px 99px 16px 37px; margin-left: auto; margin-right: 17px; margin-top: -2px; width: 292px; justify-items: center; }
.view { display: flex; justify-content: center; width: 40px; height: 13px; padding-top: 4px; }
.view.on { background: #4a4a4a; }
.zbtn { padding-top: 5px; }
.zminus { width: 8px; height: 1px; margin-top: 4px; background: #eee; }
.zslider { display: flex; justify-content: center; width: 99px; padding-top: 5px; gap: 3px; }
.ztick { width: 1px; height: 6px; margin-top: 3px; background: #bbb; }
.zthumb { width: 4px; height: 6px; background: #d0d0d0; }
.zpct { justify-self: end; padding-top: 3px; font-size: 11px; }
```
